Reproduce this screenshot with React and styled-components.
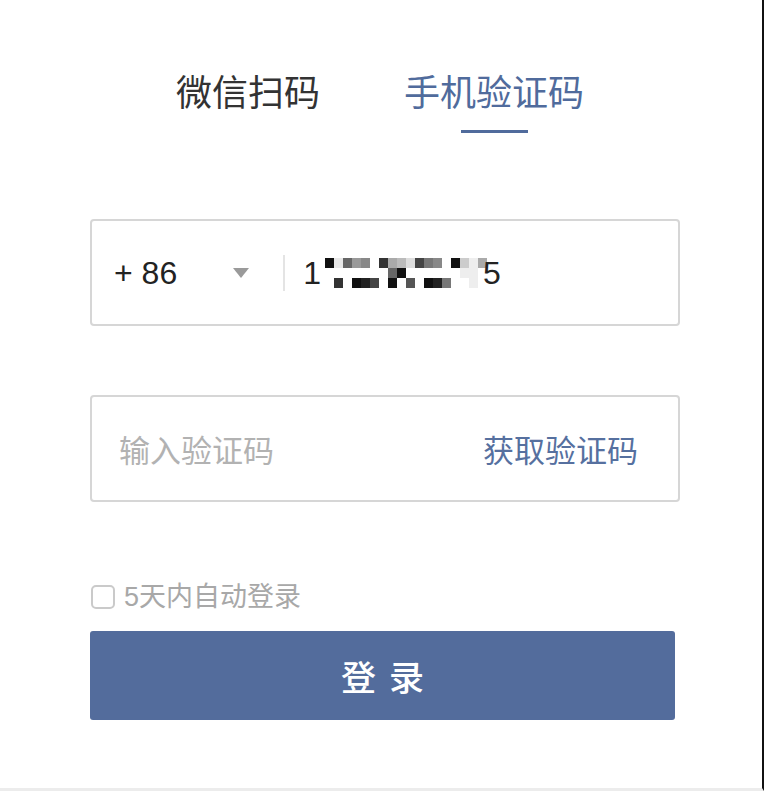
import React from "react";
import styled, { createGlobalStyle } from "styled-components";

const Global = createGlobalStyle`
  html, body { margin: 0; padding: 0; background: #fff; }
  * { box-sizing: border-box; }
`;

const Page = styled.div`
  width: 764px;
  height: 791px;
  background: #fff;
  border-right: 2px solid #111;
  border-bottom: 3px solid #ececec;
  padding: 72px 0 0 90px;
  font-family: "Liberation Sans", "Noto Sans CJK SC", sans-serif;
`;

const Tabs = styled.div`
  display: flex;
  gap: 84px;
  padding-left: 86px;
`;

const Tab = styled.div`
  display: flex;
  flex-direction: column;
  align-items: center;
`;

const TabLabel = styled.div`
  font-family: "Noto Sans CJK SC", sans-serif;
  font-size: 36px;
  line-height: 36px;
  color: ${(p) => (p.$active ? "#506b9c" : "#333")};
`;

const Underline = styled.div`
  width: 67px;
  height: 3px;
  margin-top: 22px;
  background: ${(p) => (p.$active ? "#506b9c" : "transparent")};
`;

const Field = styled.div`
  width: 590px;
  height: 107px;
  margin-top: ${(p) => p.$top}px;
  border: 2px solid #d6d6d6;
  border-radius: 4px;
  display: flex;
  align-items: center;
  padding: 0 40px 0 ${(p) => p.$padLeft}px;
`;

const Code = styled.span`
  font-size: 32px;
  color: #222;
  line-height: 1;
`;

const Caret = styled.span`
  width: 0;
  height: 0;
  margin-left: 56px;
  border-left: 8px solid transparent;
  border-right: 8px solid transparent;
  border-top: 10px solid #9a9a9a;
`;

const Divider = styled.span`
  width: 2px;
  height: 36px;
  margin-left: 34px;
  background: #e4e4e4;
`;

const Phone = styled.span`
  display: flex;
  align-items: center;
  margin-left: 18px;
  font-size: 32px;
  color: #222;
  line-height: 1;
`;

const Mosaic = styled.span`
  display: grid;
  grid-template-columns: repeat(18, 9px);
  grid-auto-rows: 10px;
  margin-left: 4px;
  margin-right: -4px;
`;

const Cell = styled.span`
  background: ${(p) => p.$c};
`;

const Placeholder = styled.span`
  flex: 1;
  font-family: "Noto Sans CJK SC", sans-serif;
  font-size: 31px;
  color: #b2b2b2;
`;

const LinkText = styled.span`
  font-family: "Noto Sans CJK SC", sans-serif;
  font-size: 31px;
  color: #56709f;
`;

const Remember = styled.label`
  display: flex;
  align-items: center;
  gap: 9px;
  margin-top: 83px;
  height: 24px;
  padding-left: 1px;
`;

const Box = styled.span`
  width: 24px;
  height: 24px;
  border: 2px solid #cacaca;
  border-radius: 5px;
`;

const RememberText = styled.span`
  font-size: 27px;
  color: #a8a8a8;
  line-height: 1;
`;

const Submit = styled.button`
  display: block;
  width: 585px;
  height: 89px;
  margin-top: 22px;
  border: none;
  border-radius: 3px;
  background: #536c9c;
  color: #fff;
  font-family: "Noto Sans CJK SC", sans-serif;
  font-size: 35px;
  font-weight: 500;
  word-spacing: 5px;
  padding: 0;
`;

const rows = [
  ["#111", "#e8e8e8", "#666", "#999", "#888", "#fff", "#333", "#aaa", "#bbb", "#ddd", "#444", "#777", "#888", "#fff", "#111", "#ccc", "#eee", "#aaa"],
  ["#fff", "#fff", "#fff", "#fff", "#fff", "#fff", "#fff", "#666", "#111", "#fff", "#fff", "#fff", "#fff", "#fff", "#fff", "#eee", "#eee", "#fff"],
  ["#fff", "#333", "#fff", "#111", "#222", "#444", "#fff", "#111", "#fff", "#555", "#fff", "#111", "#222", "#777", "#fff", "#fff", "#eee", "#fff"],
];

export default function App() {
  return (
    <>
      <Global />
      <Page>
        <Tabs>
          <Tab>
            <TabLabel>微信扫码</TabLabel>
            <Underline />
          </Tab>
          <Tab>
            <TabLabel $active>手机验证码</TabLabel>
            <Underline $active />
          </Tab>
        </Tabs>

        <Field $top={86} $padLeft={22}>
          <Code>+ 86</Code>
          <Caret />
          <Divider />
          <Phone>
            1
            <Mosaic>
              {rows.flat().map((c, i) => (
                <Cell key={i} $c={c} />
              ))}
            </Mosaic>
            5
          </Phone>
        </Field>

        <Field $top={69} $padLeft={27}>
          <Placeholder>输入验证码</Placeholder>
          <LinkText>获取验证码</LinkText>
        </Field>

        <Remember>
          <Box />
          <RememberText>5天内自动登录</RememberText>
        </Remember>

        <Submit>登 录</Submit>
      </Page>
    </>
  );
}
